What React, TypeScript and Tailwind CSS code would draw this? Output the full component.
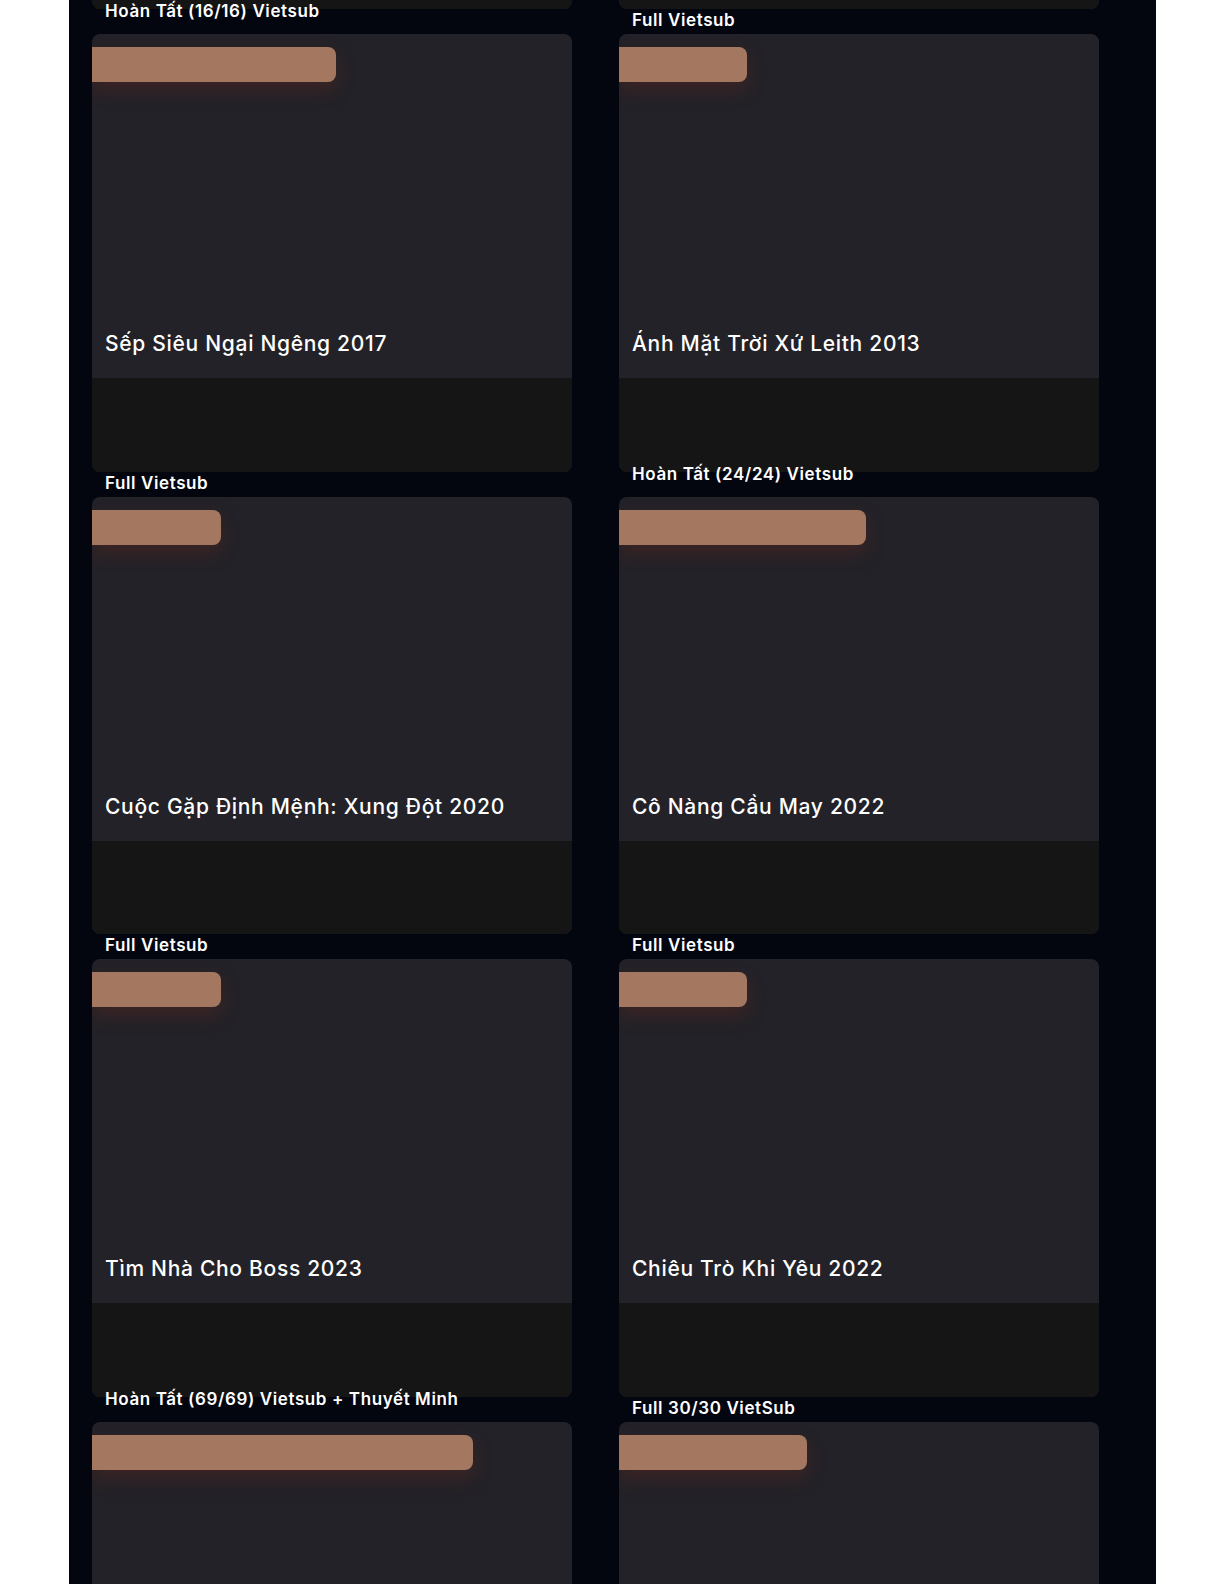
import React from "react";

type Item = {
  title: string;
  label: string;
  long: boolean;
  badge: string;
};

const items: Item[] = [
  { title: "Người Tình Ánh Trăng 2016", label: "Full Vietsub", long: false, badge: "w-[129px]" },
  { title: "Hậu Duệ Mặt Trời 2016", label: "Full Vietsub", long: false, badge: "w-[128px]" },
  { title: "Sếp Siêu Ngại Ngêng 2017", label: "Hoàn Tất (16/16) Vietsub", long: true, badge: "w-[244px]" },
  { title: "Ánh Mặt Trời Xứ Leith 2013", label: "Full Vietsub", long: false, badge: "w-[128px]" },
  { title: "Cuộc Gặp Định Mệnh: Xung Đột 2020", label: "Full Vietsub", long: false, badge: "w-[129px]" },
  { title: "Cô Nàng Cầu May 2022", label: "Hoàn Tất (24/24) Vietsub", long: true, badge: "w-[247px]" },
  { title: "Tìm Nhà Cho Boss 2023", label: "Full Vietsub", long: false, badge: "w-[129px]" },
  { title: "Chiêu Trò Khi Yêu 2022", label: "Full Vietsub", long: false, badge: "w-[128px]" },
  { title: "Hoa Khai Phú Quý 2023", label: "Hoàn Tất (69/69) Vietsub + Thuyết Minh", long: true, badge: "w-[381px]" },
  { title: "Thiếu Niên Ca Hành 2022", label: "Full 30/30 VietSub", long: false, badge: "w-[188px]" },
];

function Card({ item }: { item: Item }) {
  return (
    <div className="flex flex-col">
      <div
        className={
          "h-[25px] flex items-end px-[13px] " + (item.long ? "pb-[13px]" : "pb-[4px]")
        }
      >
        <span className="block whitespace-nowrap text-[17px] leading-[20px] font-semibold tracking-[0.6px] text-white">
          {item.label}
        </span>
      </div>
      <div className="rounded-lg overflow-hidden bg-[#232228]">
        <div className="h-[344px] flex flex-col justify-between">
          <div
            className={
              "mt-[13px] h-[35px] rounded-r-lg bg-[#a37760] shadow-[0_8px_18px_rgba(110,40,30,0.35)] " +
              item.badge
            }
          />
          <div className="px-[13px] pb-[20px] text-[21px] leading-[28px] font-medium tracking-[0.7px] text-white whitespace-nowrap">
            {item.title}
          </div>
        </div>
        <div className="h-[93.6px] bg-[#151515]" />
      </div>
    </div>
  );
}

export default function App() {
  return (
    <div
      className="min-h-[1585px] bg-white"
      style={{ fontFamily: "Inter, 'Noto Sans', 'Liberation Sans', sans-serif" }}
    >
      <div className="ml-[69px] w-[1087px] h-[1584px] bg-[#03060f] overflow-hidden">
        <div className="mt-[-453.6px] pl-[23px] grid grid-cols-[480px_480px] gap-x-[47px]">
          {items.map((it, i) => (
            <Card key={i} item={it} />
          ))}
        </div>
      </div>
    </div>
  );
}
